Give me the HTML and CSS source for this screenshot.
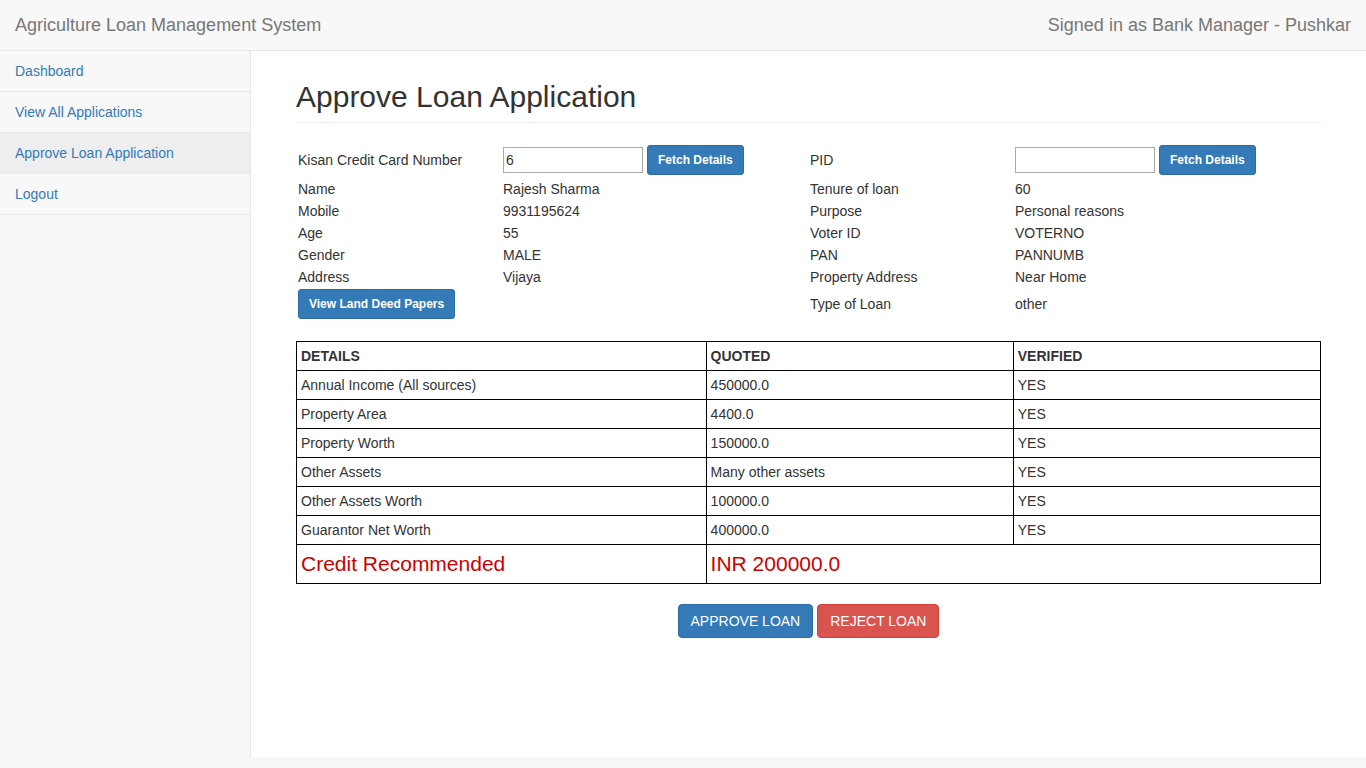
FILE: index.html
```html
<!DOCTYPE html>
<html lang="en">
<head>
<meta charset="utf-8">
<title>Approve Loan Application</title>
<link rel="stylesheet" href="styles.css">
</head>
<body>
<header class="navbar">
  <span class="brand">Agriculture Loan Management System</span>
  <span class="signed">Signed in as Bank Manager - Pushkar</span>
</header>
<div class="wrapper">
  <nav class="sidebar">
    <a class="nav-item" href="#">Dashboard</a>
    <a class="nav-item" href="#">View All Applications</a>
    <a class="nav-item active" href="#">Approve Loan Application</a>
    <a class="nav-item" href="#">Logout</a>
  </nav>
  <main class="main">
    <div class="page-header"><h2>Approve Loan Application</h2></div>
    <div class="info">
      <div class="info-col">
        <div class="row row-ctl"><span class="lbl">Kisan Credit Card Number</span><span class="val"><input class="inp" type="text" value="6"><button class="btn btn-primary btn-sm">Fetch Details</button></span></div>
        <div class="row"><span class="lbl">Name</span><span class="val">Rajesh Sharma</span></div>
        <div class="row"><span class="lbl">Mobile</span><span class="val">9931195624</span></div>
        <div class="row"><span class="lbl">Age</span><span class="val">55</span></div>
        <div class="row"><span class="lbl">Gender</span><span class="val">MALE</span></div>
        <div class="row"><span class="lbl">Address</span><span class="val">Vijaya</span></div>
        <div class="row row-btn"><button class="btn btn-primary btn-sm btn-start">View Land Deed Papers</button></div>
      </div>
      <div class="info-col">
        <div class="row row-ctl"><span class="lbl">PID</span><span class="val"><input class="inp" type="text" value=""><button class="btn btn-primary btn-sm">Fetch Details</button></span></div>
        <div class="row"><span class="lbl">Tenure of loan</span><span class="val">60</span></div>
        <div class="row"><span class="lbl">Purpose</span><span class="val">Personal reasons</span></div>
        <div class="row"><span class="lbl">Voter ID</span><span class="val">VOTERNO</span></div>
        <div class="row"><span class="lbl">PAN</span><span class="val">PANNUMB</span></div>
        <div class="row"><span class="lbl">Property Address</span><span class="val">Near Home</span></div>
        <div class="row row-btn"><span class="lbl">Type of Loan</span><span class="val">other</span></div>
      </div>
    </div>
    <table class="details">
      <colgroup><col class="c1"><col class="c2"><col class="c3"></colgroup>
      <thead>
        <tr><th>DETAILS</th><th>QUOTED</th><th>VERIFIED</th></tr>
      </thead>
      <tbody>
        <tr><td>Annual Income (All sources)</td><td>450000.0</td><td>YES</td></tr>
        <tr><td>Property Area</td><td>4400.0</td><td>YES</td></tr>
        <tr><td>Property Worth</td><td>150000.0</td><td>YES</td></tr>
        <tr><td>Other Assets</td><td>Many other assets</td><td>YES</td></tr>
        <tr><td>Other Assets Worth</td><td>100000.0</td><td>YES</td></tr>
        <tr><td>Guarantor Net Worth</td><td>400000.0</td><td>YES</td></tr>
        <tr class="credit"><td>Credit Recommended</td><td colspan="2">INR 200000.0</td></tr>
      </tbody>
    </table>
    <div class="actions">
      <button class="btn btn-primary">APPROVE LOAN</button>
      <button class="btn btn-danger">REJECT LOAN</button>
    </div>
  </main>
</div>
</body>
</html>
```
FILE: styles.css
```css
* { box-sizing: border-box; }
html, body { margin: 0; padding: 0; }
body {
  background: #f7f7f7;
  font-family: "Liberation Sans", Arial, sans-serif;
  font-size: 14px;
  line-height: 20px;
  color: #333;
}
.navbar {
  height: 51px;
  background: #f8f8f8;
  border-bottom: 1px solid #e7e7e7;
  display: flex;
  justify-content: space-between;
  align-items: center;
  padding: 0 15px 1px;
  font-size: 18px;
  color: #777;
}
.wrapper {
  display: flex;
  height: 706px;
}
.sidebar {
  width: 251px;
  flex: none;
  background: #f8f8f8;
  border-right: 1px solid #e7e7e7;
  display: flex;
  flex-direction: column;
}
.nav-item {
  display: block;
  padding: 10px 15px;
  line-height: 20px;
  border-bottom: 1px solid #e7e7e7;
  color: #337ab7;
  text-decoration: none;
}
.nav-item.active { background: #eee; }
.main {
  flex: 1;
  background: #fff;
  padding: 29px 45px 0;
}
.page-header {
  padding-bottom: 9px;
  border-bottom: 1px solid #eee;
  margin-bottom: 21px;
}
.page-header h2 {
  margin: 0;
  font-size: 30px;
  line-height: 33px;
  font-weight: 500;
  color: #333;
}
.info {
  display: grid;
  grid-template-columns: 512px 1fr;
}
.info-col { display: flex; flex-direction: column; padding-left: 2px; }
.row {
  display: grid;
  grid-template-columns: 205px 1fr;
  height: 22px;
  align-items: center;
}
.row-ctl { height: 32px; margin-bottom: 2px; }
.row-btn { height: 32px; }
.btn-start { justify-self: start; }
.val { display: flex; align-items: center; gap: 4px; }
.inp {
  width: 140px;
  height: 26px;
  border: 1px solid #a9a9a9;
  padding: 1px 2px;
  font-family: "Liberation Sans", Arial, sans-serif;
  font-size: 14px;
  color: #333;
  margin: 0;
}
.btn {
  display: inline-block;
  font-family: "Liberation Sans", Arial, sans-serif;
  font-size: 14px;
  line-height: 20px;
  padding: 6px 12px;
  border: 1px solid transparent;
  border-radius: 4px;
  color: #fff;
  cursor: pointer;
  margin: 0;
}
.btn-sm {
  font-size: 12px;
  font-weight: bold;
  line-height: 18px;
  padding: 5px 10px;
  border-radius: 3px;
}
.btn-primary { background: #337ab7; border-color: #2e6da4; }
.btn-danger { background: #d9534f; border-color: #d43f3a; }
.details {
  width: 100%;
  border-collapse: collapse;
  margin-top: 21px;
  table-layout: fixed;
}
.c1 { width: 40%; }
.c2 { width: 30%; }
.c3 { width: 30%; }
.details th, .details td {
  border: 1px solid #000;
  padding: 4px;
  text-align: left;
  line-height: 20px;
}
.details th { font-weight: bold; }
.credit td {
  font-size: 21px;
  line-height: 30px;
  color: #c00;
}
.actions {
  display: flex;
  justify-content: center;
  gap: 4px;
  margin-top: 20px;
}
```
